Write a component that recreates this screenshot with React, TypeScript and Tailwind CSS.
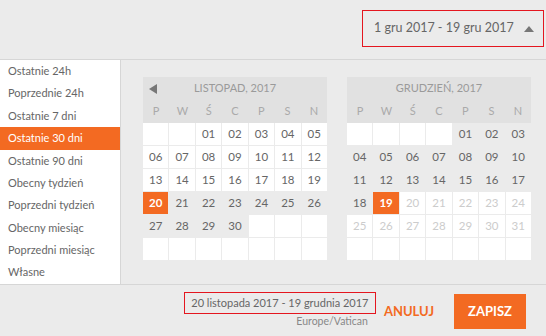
import React from "react"

const ranges = [
  "Ostatnie 24h",
  "Poprzednie 24h",
  "Ostatnie 7 dni",
  "Ostatnie 30 dni",
  "Ostatnie 90 dni",
  "Obecny tydzień",
  "Poprzedni tydzień",
  "Obecny miesiąc",
  "Poprzedni miesiąc",
  "Własne",
]

const dayNames = ["P", "W", "Ś", "C", "P", "S", "N"]

type Cell = { label: string; kind: "empty" | "normal" | "range" | "active" | "disabled" }

function pad(n: number) {
  return n < 10 ? "0" + n : String(n)
}

// build 42 cells for a month
function buildMonth(offset: number, days: number, kindOf: (d: number) => Cell["kind"]): Cell[] {
  const cells: Cell[] = []
  for (let i = 0; i < 42; i++) {
    const d = i - offset + 1
    if (d < 1 || d > days) cells.push({ label: "", kind: "empty" })
    else cells.push({ label: pad(d), kind: kindOf(d) })
  }
  return cells
}

const november = buildMonth(2, 30, (d) => (d < 20 ? "normal" : d === 20 ? "active" : "range"))
const december = buildMonth(4, 31, (d) => (d < 19 ? "range" : d === 19 ? "active" : "disabled"))

function MonthView({ title, cells, showPrev }: { title: string; cells: Cell[]; showPrev?: boolean }) {
  return (
    <div className="w-[184px]">
      <div className="bg-[#e1e1e1]">
        <div className="relative h-[23px] flex items-center justify-center text-[11px] text-[#9a9a9a]">
          {showPrev && (
            <span className="absolute left-[6px] top-[7px] w-0 h-0 border-y-[5px] border-y-transparent border-r-[8px] border-r-[#777]" />
          )}
          {title}
        </div>
        <div className="grid grid-cols-7 h-[23px] items-center text-[11px] text-[#aaa]">
          {dayNames.map((d, i) => (
            <div key={i} className="text-center">{d}</div>
          ))}
        </div>
      </div>
      <div className="grid grid-cols-7 gap-px">
        {cells.map((c, i) => {
          let cls = "bg-white text-[#666]"
          if (c.kind === "range") cls = "bg-[#ebebeb] text-[#666]"
          if (c.kind === "active") cls = "bg-[#f36a22] text-white font-bold"
          if (c.kind === "disabled") cls = "bg-white text-[#ccc]"
          return (
            <div key={i} className={`h-[22px] flex items-center justify-center text-[11.5px] ${cls}`}>
              {c.label}
            </div>
          )
        })}
      </div>
    </div>
  )
}

export default function App() {
  return (
    <div className="w-[546px] h-[336px] bg-[#ebebeb] font-['Lato',sans-serif] flex flex-col overflow-hidden">
      {/* top */}
      <div className="h-[59px] flex justify-end items-start pt-[10px] pr-[2px]">
        <div className="w-[182px] h-[37px] border border-[#e4161f] flex items-center pl-[11px] text-[12.5px] text-[#666] whitespace-nowrap">
          <span>1 gru 2017 - 19 gru 2017</span>
          <span className="ml-[10px] w-0 h-0 border-x-[5px] border-x-transparent border-b-[6px] border-b-[#777]" />
        </div>
      </div>

      {/* middle */}
      <div className="h-[226px] flex border-y border-[#d6d6d6]">
        <div className="w-[121px] bg-white border-r border-[#d6d6d6] flex flex-col">
          {ranges.map((r, i) => (
            <div
              key={r}
              className={`h-[22.4px] flex items-center pl-[8px] text-[11px] whitespace-nowrap ${
                i === 3 ? "bg-[#f36a22] text-white" : "text-[#666]"
              }`}
            >
              {r}
            </div>
          ))}
        </div>
        <div className="flex gap-[20px] pl-[22px] pt-[17px]">
          <MonthView title="LISTOPAD, 2017" cells={november} showPrev />
          <MonthView title="GRUDZIEŃ, 2017" cells={december} />
        </div>
      </div>

      {/* footer */}
      <div className="flex-1 flex justify-end items-start pt-[7px] pr-[20px]">
        <div className="flex flex-col items-end">
          <div className="w-[192px] h-[22px] border border-[#e4161f] flex items-center justify-center text-[11px] text-[#666] whitespace-nowrap">
            20 listopada 2017 - 19 grudnia 2017
          </div>
          <div className="mr-[8px] mt-[1px] text-[10.5px] leading-[12px] text-[#888]">Europe/Vatican</div>
        </div>
        <div className="ml-[8px] mt-[10px] text-[13px] font-bold text-[#f36a22]">ANULUJ</div>
        <button className="ml-[20px] mt-[2px] w-[72px] h-[35px] bg-[#f36a22] text-white text-[13px] font-bold">
          ZAPISZ
        </button>
      </div>
    </div>
  )
}
